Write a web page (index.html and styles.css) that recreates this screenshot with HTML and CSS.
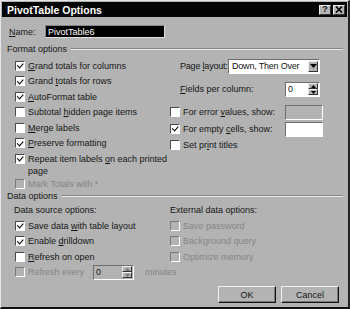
FILE: index.html
```html
<!DOCTYPE html>
<html lang="en">

<head>
    <meta charset="UTF-8">
    <title>PivotTable Options</title>
    <link rel="stylesheet" href="styles.css">
</head>

<body>
    <div class="Dialog">
        <!-- TITLE BAR -->
        <header class="Titlebar">
            <span class="Titlebar-text">PivotTable Options</span>
            <div class="Titlebar-buttons">
                <span class="Tbtn">?</span>
                <span class="Tbtn">
                    <svg width="8" height="7" viewBox="0 0 8 7"><path d="M1 0.5 L7 6.5 M7 0.5 L1 6.5" stroke="#000" stroke-width="1.6"/></svg>
                </span>
            </div>
        </header>

        <main class="Body">
            <div class="NameRow">
                <span class="NameRow-label"><u>N</u>ame:</span>
                <div class="Field Field--selected">PivotTable6</div>
            </div>

            <!-- FORMAT OPTIONS -->
            <div class="Group"><span>Format options</span><i class="Group-line"></i></div>
            <div class="Format">
                <div class="Col">
                    <div class="Check is-on"><span class="Box"></span><span><u>G</u>rand totals for columns</span></div>
                    <div class="Check is-on"><span class="Box"></span><span>Grand <u>t</u>otals for rows</span></div>
                    <div class="Check is-on"><span class="Box"></span><span><u>A</u>utoFormat table</span></div>
                    <div class="Check"><span class="Box"></span><span>Subtotal <u>h</u>idden page items</span></div>
                    <div class="Check"><span class="Box"></span><span><u>M</u>erge labels</span></div>
                    <div class="Check is-on"><span class="Box"></span><span><u>P</u>reserve formatting</span></div>
                    <div class="Check Check--wrap is-on"><span class="Box"></span><span>Repeat item labels <u>o</u>n each printed<br>page</span></div>
                    <div class="Check is-disabled"><span class="Box"></span><span>Mark Totals with *</span></div>
                </div>
                <div class="Col Col--right">
                    <div class="Row Row--layout">
                        <span class="Row-label">Page <u>l</u>ayout:</span>
                        <div class="Select">
                            <span class="Select-value">Down, Then Over</span>
                            <span class="Arrow"><svg width="7" height="4" viewBox="0 0 7 4"><path d="M0 0 H7 L3.5 4 Z" fill="#000"/></svg></span>
                        </div>
                    </div>
                    <div class="Row Row--fields">
                        <span><u>F</u>ields per column:</span>
                        <div class="Spin">
                            <span class="Spin-value">0</span>
                            <span class="Spin-btns">
                                <span class="Spin-btn"><svg width="5" height="3" viewBox="0 0 5 3"><path d="M0 3 H5 L2.5 0 Z" fill="#000"/></svg></span>
                                <span class="Spin-btn"><svg width="5" height="3" viewBox="0 0 5 3"><path d="M0 0 H5 L2.5 3 Z" fill="#000"/></svg></span>
                            </span>
                        </div>
                    </div>
                    <div class="Row Row--check Row--error">
                        <div class="Check"><span class="Box"></span><span>For error <u>v</u>alues, show:</span></div>
                        <div class="Field Field--disabled"></div>
                    </div>
                    <div class="Row Row--check Row--empty">
                        <div class="Check is-on"><span class="Box"></span><span>For empty <u>c</u>ells, show:</span></div>
                        <div class="Field"></div>
                    </div>
                    <div class="Check"><span class="Box"></span><span>Set pr<u>i</u>nt titles</span></div>
                </div>
            </div>

            <!-- DATA OPTIONS -->
            <div class="Group Group--data"><span>Data options</span><i class="Group-line"></i></div>
            <div class="Data">
                <div class="Col Col--data">
                    <div class="Sub">Data source options:</div>
                    <div class="Check is-on"><span class="Box"></span><span>Save data <u>w</u>ith table layout</span></div>
                    <div class="Check is-on"><span class="Box"></span><span>Enable <u>d</u>rilldown</span></div>
                    <div class="Check"><span class="Box"></span><span><u>R</u>efresh on open</span></div>
                    <div class="Check is-disabled Check--refresh">
                        <span class="Box"></span><span class="Check-text">Refresh every</span>
                        <div class="Spin Spin--disabled">
                            <span class="Spin-value">0</span>
                            <span class="Spin-btns">
                                <span class="Spin-btn"><svg width="5" height="3" viewBox="0 0 5 3"><path d="M0 3 H5 L2.5 0 Z" fill="#777"/></svg></span>
                                <span class="Spin-btn"><svg width="5" height="3" viewBox="0 0 5 3"><path d="M0 0 H5 L2.5 3 Z" fill="#777"/></svg></span>
                            </span>
                        </div>
                        <span class="Minutes">minutes</span>
                    </div>
                </div>
                <div class="Col Col--ext">
                    <div class="Sub">External data options:</div>
                    <div class="Check is-disabled"><span class="Box"></span><span>Save password</span></div>
                    <div class="Check is-disabled"><span class="Box"></span><span>Background query</span></div>
                    <div class="Check is-disabled"><span class="Box"></span><span>Optimize memory</span></div>
                </div>
            </div>

            <div class="Buttons">
                <button class="Btn">OK</button>
                <button class="Btn">Cancel</button>
            </div>
        </main>
    </div>
</body>

</html>
```

FILE: styles.css
```css
/* VARIABLES */
:root {
    --color-face: #b3b3b3;
    --color-text: #151515;
    --color-disabled: #858585;
    --color-shadow: #6e6e6e;
    --color-light: #f2f2f2;
}

* {
    margin: 0;
    padding: 0;
    box-sizing: border-box;
}

body {
    background: #fff;
    font-family: "Liberation Sans", Arial, sans-serif;
    font-size: 9px;
    color: var(--color-text);
}

u {
    text-decoration-thickness: 1px;
    text-underline-offset: 1px;
}

/* DIALOG */
.Dialog {
    width: 350px;
    height: 309px;
    background: var(--color-face);
    border-top: 1px solid #e6e6e6;
    border-left: 1px solid #e6e6e6;
    border-right: 2px solid #222;
    border-bottom: 2px solid #111;
    padding: 1px;
    display: flex;
    flex-direction: column;
}

/* TITLE BAR */
.Titlebar {
    height: 15px;
    background: #050505;
    display: flex;
    align-items: center;
    justify-content: space-between;
    padding: 0 2px 0 5px;
}

.Titlebar-text {
    color: #fff;
    font-weight: bold;
    font-size: 10.5px;
}

.Titlebar-buttons {
    display: flex;
    gap: 2px;
}

.Tbtn {
    width: 12px;
    height: 10px;
    background: var(--color-face);
    border-top: 1px solid #eee;
    border-left: 1px solid #eee;
    border-right: 1px solid #333;
    border-bottom: 1px solid #333;
    display: flex;
    align-items: center;
    justify-content: center;
    font-weight: bold;
    font-size: 9px;
    line-height: 1;
}

/* BODY */
.Body {
    flex: 1;
    display: flex;
    flex-direction: column;
    padding: 0 4px 0 4px;
}

.NameRow {
    display: flex;
    align-items: center;
    margin-top: 8px;
    height: 13px;
    padding-left: 3px;
}

.NameRow-label {
    width: 36px;
}

.Field {
    height: 15px;
    background: #fff;
    border-top: 1px solid var(--color-shadow);
    border-left: 1px solid var(--color-shadow);
    border-bottom: 1px solid #fff;
    border-right: 1px solid #fff;
    padding-left: 2px;
    display: flex;
    align-items: center;
}

.Field--selected {
    width: 120px;
    height: 13px;
    background: #000;
    color: #fff;
    border-color: #888 #e0e0e0 #e0e0e0 #888;
}

.Field--disabled {
    background: var(--color-face);
}

/* GROUP HEADERS */
.Group {
    display: flex;
    align-items: center;
    gap: 4px;
    margin-top: 5px;
    height: 12px;
    padding-left: 1px;
}

.Group-line {
    flex: 1;
    height: 2px;
    border-top: 1px solid #858585;
    border-bottom: 1px solid #ececec;
}

.Group--data {
    margin-top: -2px;
}

/* CHECKBOXES */
.Check {
    display: flex;
    align-items: center;
    gap: 3px;
    height: 15.5px;
    white-space: nowrap;
}

.Box {
    width: 10px;
    height: 10px;
    flex: none;
    background: #fff;
    border-top: 1px solid #4a4a4a;
    border-left: 1px solid #4a4a4a;
    border-right: 1px solid #fff;
    border-bottom: 1px solid #fff;
    display: flex;
    align-items: center;
    justify-content: center;
}

.Check.is-on .Box::after {
    content: "";
    width: 5px;
    height: 2.5px;
    border-left: 1.6px solid #000;
    border-bottom: 1.6px solid #000;
    transform: translateY(-1px) rotate(-48deg);
}

.Check.is-disabled {
    color: var(--color-disabled);
}

.Check.is-disabled .Box {
    background: var(--color-face);
    border-top-color: #7a7a7a;
    border-left-color: #7a7a7a;
}

.Check--wrap {
    height: 25px;
    align-items: flex-start;
    padding-top: 2px;
    line-height: 12px;
}

.Check--wrap .Box {
    margin-top: 1px;
}

/* FORMAT SECTION */
.Format {
    display: flex;
    margin-top: 3px;
}

.Col {
    display: flex;
    flex-direction: column;
}

.Format .Col:first-child {
    padding-left: 9px;
    width: 164px;
}

.Row {
    display: flex;
    align-items: center;
    justify-content: space-between;
    white-space: nowrap;
}

.Row-label {
    letter-spacing: -0.2px;
}

.Row--layout {
    height: 16px;
    padding-left: 10px;
    width: 150px;
}

.Row--fields {
    height: 16px;
    margin-top: 7px;
    padding-left: 10px;
    width: 150px;
}

.Row--check {
    height: 16px;
    width: 153px;
}

.Row--error {
    margin-top: 7px;
}

.Row--empty {
    margin-top: 1px;
}

.Row--check .Field {
    width: 38px;
}

/* DROPDOWN */
.Select {
    width: 92px;
    height: 15px;
    background: #fff;
    border-top: 1px solid var(--color-shadow);
    border-left: 1px solid var(--color-shadow);
    border-right: 1px solid #fff;
    border-bottom: 1px solid #fff;
    display: flex;
    align-items: center;
    justify-content: space-between;
    padding: 1px 1px 1px 3px;
}

.Select-value {
    letter-spacing: -0.2px;
}

.Arrow {
    width: 10px;
    height: 11px;
    background: var(--color-face);
    border-top: 1px solid #eee;
    border-left: 1px solid #eee;
    border-right: 1px solid #333;
    border-bottom: 1px solid #333;
    display: flex;
    align-items: center;
    justify-content: center;
}

/* SPINNER */
.Spin {
    width: 35px;
    height: 15px;
    flex: none;
    background: #fff;
    border-top: 1px solid var(--color-shadow);
    border-left: 1px solid var(--color-shadow);
    border-right: 1px solid #fff;
    border-bottom: 1px solid #fff;
    display: flex;
    align-items: center;
    justify-content: space-between;
    padding: 0 1px 0 2px;
}

.Spin-btns {
    display: flex;
    flex-direction: column;
    height: 12px;
}

.Spin-btn {
    width: 10px;
    height: 6px;
    background: var(--color-face);
    border-top: 1px solid #eee;
    border-left: 1px solid #eee;
    border-right: 1px solid #333;
    border-bottom: 1px solid #333;
    display: flex;
    align-items: center;
    justify-content: center;
}

.Spin--disabled {
    width: 41px;
    background: var(--color-face);
    color: var(--color-text);
}

/* DATA SECTION */
.Data {
    display: flex;
    margin-top: 1px;
}

.Col--data {
    width: 164px;
    flex: none;
    padding-left: 8px;
}

.Col--data .Check {
    padding-left: 1px;
}

.Sub {
    height: 15.5px;
    display: flex;
    align-items: center;
}

.Check--refresh .Check-text {
    width: 62px;
    flex: none;
}

.Minutes {
    margin-left: 8px;
}

/* BUTTONS */
.Buttons {
    display: flex;
    justify-content: flex-end;
    gap: 5px;
    margin-top: auto;
    margin-bottom: 3px;
    padding-right: 4px;
}

.Btn {
    width: 58px;
    height: 17px;
    background: var(--color-face);
    border-top: 1px solid #f0f0f0;
    border-left: 1px solid #f0f0f0;
    border-right: 1px solid #111;
    border-bottom: 1px solid #111;
    box-shadow: inset -1px -1px 0 #7a7a7a;
    font-family: "Liberation Sans", Arial, sans-serif;
    font-size: 9px;
    color: var(--color-text);
}
```
